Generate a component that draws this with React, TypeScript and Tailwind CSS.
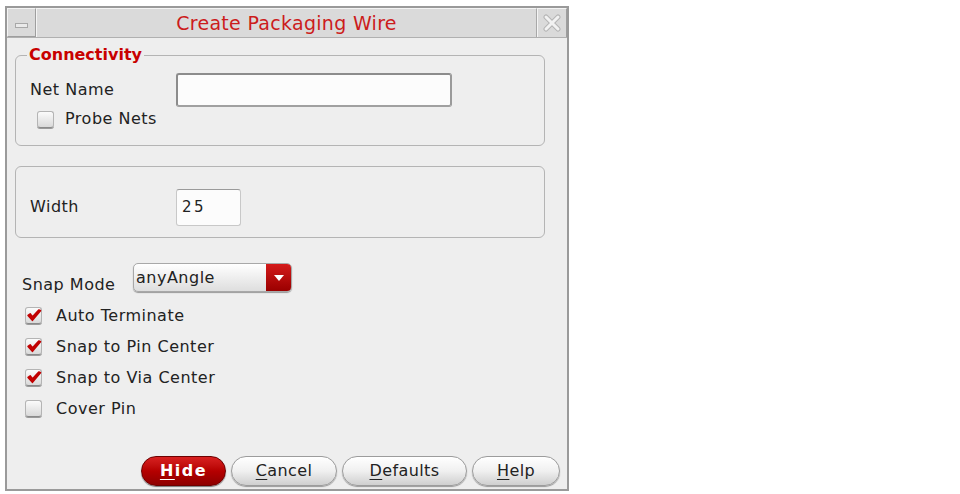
import React from "react";

const font = { fontFamily: '"DejaVu Sans", Verdana, sans-serif' };

function Check({ checked }: { checked?: boolean }) {
  return (
    <div className="relative w-[17px] h-[17px] rounded-[3px] border border-[#b4b4b4] border-b-[#8a8a8a] bg-gradient-to-b from-[#fbfbfb] to-[#d9d9d9] shadow-[0_1px_0_#9a9a9a]">
      {checked && (
        <svg className="absolute left-[0px] top-[0px]" width="16" height="16" viewBox="0 0 15 15">
          <path d="M2 7 L6 11.5 L13.5 2.5 L12 2 L6 8.5 L4 5.5 Z" fill="#d00000" stroke="#c00000" strokeWidth="1.6" strokeLinejoin="round" />
        </svg>
      )}
    </div>
  );
}

function Btn({ label, w, primary }: { label: string; w: number; primary?: boolean }) {
  const first = label[0];
  const rest = label.slice(1);
  return (
    <div
      style={{ width: w }}
      className={
        primary
          ? "h-[30px] rounded-full border border-[#6e0000] bg-gradient-to-b from-[#d82020] via-[#b50000] to-[#8e0000] flex items-center justify-center text-white font-bold tracking-[1.5px] text-[16px] shadow-[0_1px_1px_#777]"
          : "h-[30px] rounded-full border border-[#9c9c9c] bg-gradient-to-b from-[#ffffff] via-[#f0f0f0] to-[#cfcfcf] flex items-center justify-center text-[#222] text-[16px] tracking-[0.4px] shadow-[0_1px_1px_#999]"
      }
    >
      <span>
        <span className="underline underline-offset-[3px]">{first}</span>
        {rest}
      </span>
    </div>
  );
}

export default function App() {
  return (
    <div className="bg-white w-[960px] h-[494px] pt-[6px] pl-[5px]" style={font}>
      <div className="w-[564px] h-[485px] border-2 border-[#9a9a9a] bg-[#eeeeee] flex flex-col text-[#222] text-[16px] tracking-[0.5px]">
        {/* Title bar */}
        <div className="h-[30px] flex bg-[#dadada] border-b border-[#b0b0b0]">
          <div className="w-[29px] h-full border-t border-l border-[#f4f4f4] border-r border-r-[#9e9e9e] border-b border-b-[#9e9e9e] flex items-center justify-center">
            <div className="w-[13px] h-[5px] mt-[5px] border border-[#a8a8a8] bg-[#eaeaea]" />
          </div>
          <div className="flex-1 flex items-center justify-center border-t border-l border-[#f4f4f4] border-r border-r-[#a8a8a8] text-[#cc1c1c] text-[19px] tracking-[0.3px]">
            Create Packaging Wire
          </div>
          <div className="w-[30px] h-full border-t border-l border-[#f4f4f4] border-r border-r-[#9e9e9e] flex items-center justify-center">
            <svg width="18" height="18" viewBox="0 0 18 18">
              <path d="M3 3 L15 15 M15 3 L3 15" stroke="#b4b4b4" strokeWidth="5" strokeLinecap="round" />
              <path d="M3 3 L15 15 M15 3 L3 15" stroke="#f2f2f2" strokeWidth="3" strokeLinecap="round" />
            </svg>
          </div>
        </div>

        {/* Connectivity */}
        <fieldset className="mt-[7px] ml-[8px] w-[530px] border border-[#b4b4b4] rounded-[6px] pb-[14px] px-0 pt-0 m-0">
          <legend className="ml-[11px] px-[2px] text-[#c80000] font-bold text-[16px] leading-[20px] tracking-[0px]">
            Connectivity
          </legend>
          <div className="flex items-center mt-[8px]">
            <div className="ml-[14px] w-[146px]">Net Name</div>
            <div className="w-[276px] h-[34px] rounded-[3px] bg-[#fcfcfc] border-2 border-[#8c8c8c] border-b-[#a0a0a0] border-r-[#9a9a9a]" />
          </div>
          <div className="flex items-center mt-[0px] ml-[21px]">
            <Check />
            <span className="ml-[11px]">Probe Nets</span>
          </div>
        </fieldset>

        {/* Width */}
        <div className="mt-[20px] ml-[8px] w-[530px] h-[72px] border border-[#b4b4b4] rounded-[6px] pt-[22px] flex items-start">
          <div className="ml-[14px] w-[146px] h-[36px] flex items-center">Width</div>
          <div className="w-[65px] h-[37px] rounded-[3px] bg-[#fcfcfc] border border-[#c8c8c8] border-t-[#9a9a9a] flex items-center pl-[5px] text-[15px] tracking-[2.5px]">
            25
          </div>
        </div>

        {/* Snap mode */}
        <div className="mt-[25px] flex items-start">
          <div className="ml-[15px] w-[111px] pt-[12px] leading-[20px]">Snap Mode</div>
          <div className="w-[159px] h-[29px] rounded-[5px] border border-[#a8a8a8] bg-gradient-to-b from-[#ffffff] to-[#dedede] flex overflow-hidden shadow-[0_1px_1px_#999]">
            <div className="flex-1 pl-[2px] pt-[4px] leading-[20px]">anyAngle</div>
            <div className="w-[25px] h-full bg-gradient-to-b from-[#d41a1a] to-[#9a0000] flex items-center justify-center">
              <svg width="10" height="6" viewBox="0 0 10 6">
                <path d="M0 0 L10 0 L5 6 Z" fill="#ffffff" />
              </svg>
            </div>
          </div>
        </div>

        {/* Checkboxes */}
        <div className="mt-[5px] flex flex-col">
          {[
            ["Auto Terminate", true],
            ["Snap to Pin Center", true],
            ["Snap to Via Center", true],
            ["Cover Pin", false],
          ].map(([label, c]) => (
            <div key={label as string} className="h-[31px] flex items-center ml-[18px]">
              <Check checked={c as boolean} />
              <span className="ml-[14px]">{label as string}</span>
            </div>
          ))}
        </div>

        {/* Buttons */}
        <div className="mt-auto mb-[3px] flex justify-end gap-[5px] pr-[7px]">
          <Btn label="Hide" w={85} primary />
          <Btn label="Cancel" w={106} />
          <Btn label="Defaults" w={125} />
          <Btn label="Help" w={88} />
        </div>
      </div>
    </div>
  );
}
